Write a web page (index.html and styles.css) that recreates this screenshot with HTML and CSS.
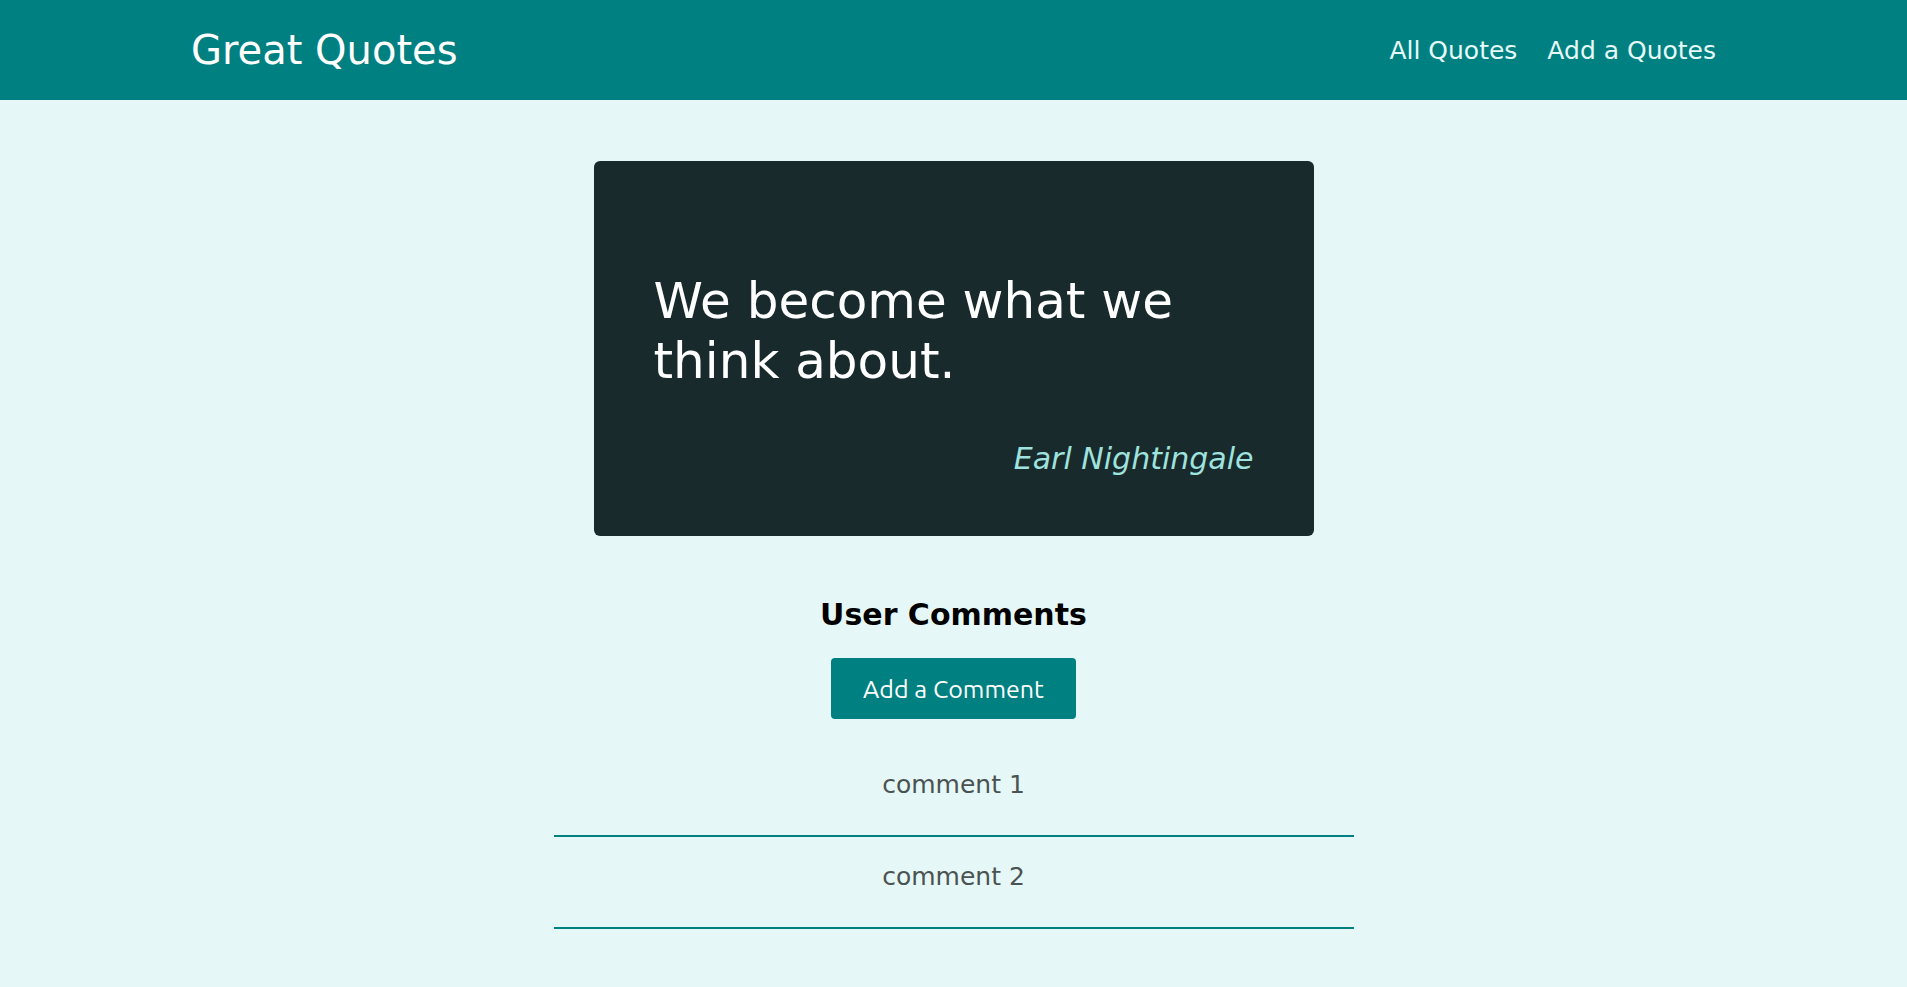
FILE: index.html
```html
<!DOCTYPE html>
<html lang="en">
<head>
<meta charset="utf-8">
<title>Great Quotes</title>
<link rel="stylesheet" href="styles.css">
</head>
<body>
<header class="header">
  <div class="logo">Great Quotes</div>
  <nav class="nav">
    <a class="nav-link" href="#">All Quotes</a>
    <a class="nav-link" href="#">Add a Quotes</a>
  </nav>
</header>
<main class="main">
  <figure class="quote">
    <p class="quote-text">We become what we think about.</p>
    <figcaption class="quote-author">Earl Nightingale</figcaption>
  </figure>
  <section class="comments">
    <h2 class="comments-title">User Comments</h2>
    <button class="btn" type="button">Add a Comment</button>
    <ul class="comment-list">
      <li class="comment-item"><p class="comment-text">comment 1</p></li>
      <li class="comment-item"><p class="comment-text">comment 2</p></li>
    </ul>
  </section>
</main>
</body>
</html>
```

FILE: styles.css
```css
* {
  box-sizing: border-box;
}

html {
  font-size: 20px;
}

body {
  margin: 0;
  font-family: "DejaVu Sans", sans-serif;
  background-color: #e5f8f7;
  color: #000;
}

.header {
  height: 100px;
  background-color: #008080;
  display: flex;
  align-items: center;
  justify-content: space-between;
  padding: 0 191px;
}

.logo {
  font-size: 40px;
  color: #ffffff;
}

.nav {
  display: flex;
  gap: 30px;
}

.nav-link {
  font-size: 25px;
  color: #e6fafa;
  text-decoration: none;
}

.main {
  width: 800px;
  margin: 0 auto;
}

.quote {
  width: 720px;
  margin: 61px auto 0;
  padding: 60px;
  background-color: #182a2c;
  border-radius: 6px;
  color: #ffffff;
}

.quote-text {
  font-size: 50px;
  line-height: 1.2;
  margin: 50px 0;
}

.quote-author {
  font-size: 30px;
  font-style: italic;
  text-align: right;
  color: #9fe2de;
}

.comments {
  text-align: center;
}

.comments-title {
  font-size: 30px;
  font-weight: bold;
  margin: 61px 0 26px;
}

.btn {
  font-family: "Ubuntu", "Lato", sans-serif;
  font-size: 25px;
  color: #ffffff;
  background-color: #008080;
  border: none;
  border-radius: 4px;
  padding: 0 32px;
  height: 61px;
  cursor: pointer;
}

.comment-list {
  list-style: none;
  margin: 26px 0 0;
  padding: 0;
}

.comment-item {
  border-bottom: 2px solid #008080;
  padding: 25px 0 36px;
}

.comment-text {
  font-size: 25px;
  color: #4b5352;
  margin: 0;
}
```
